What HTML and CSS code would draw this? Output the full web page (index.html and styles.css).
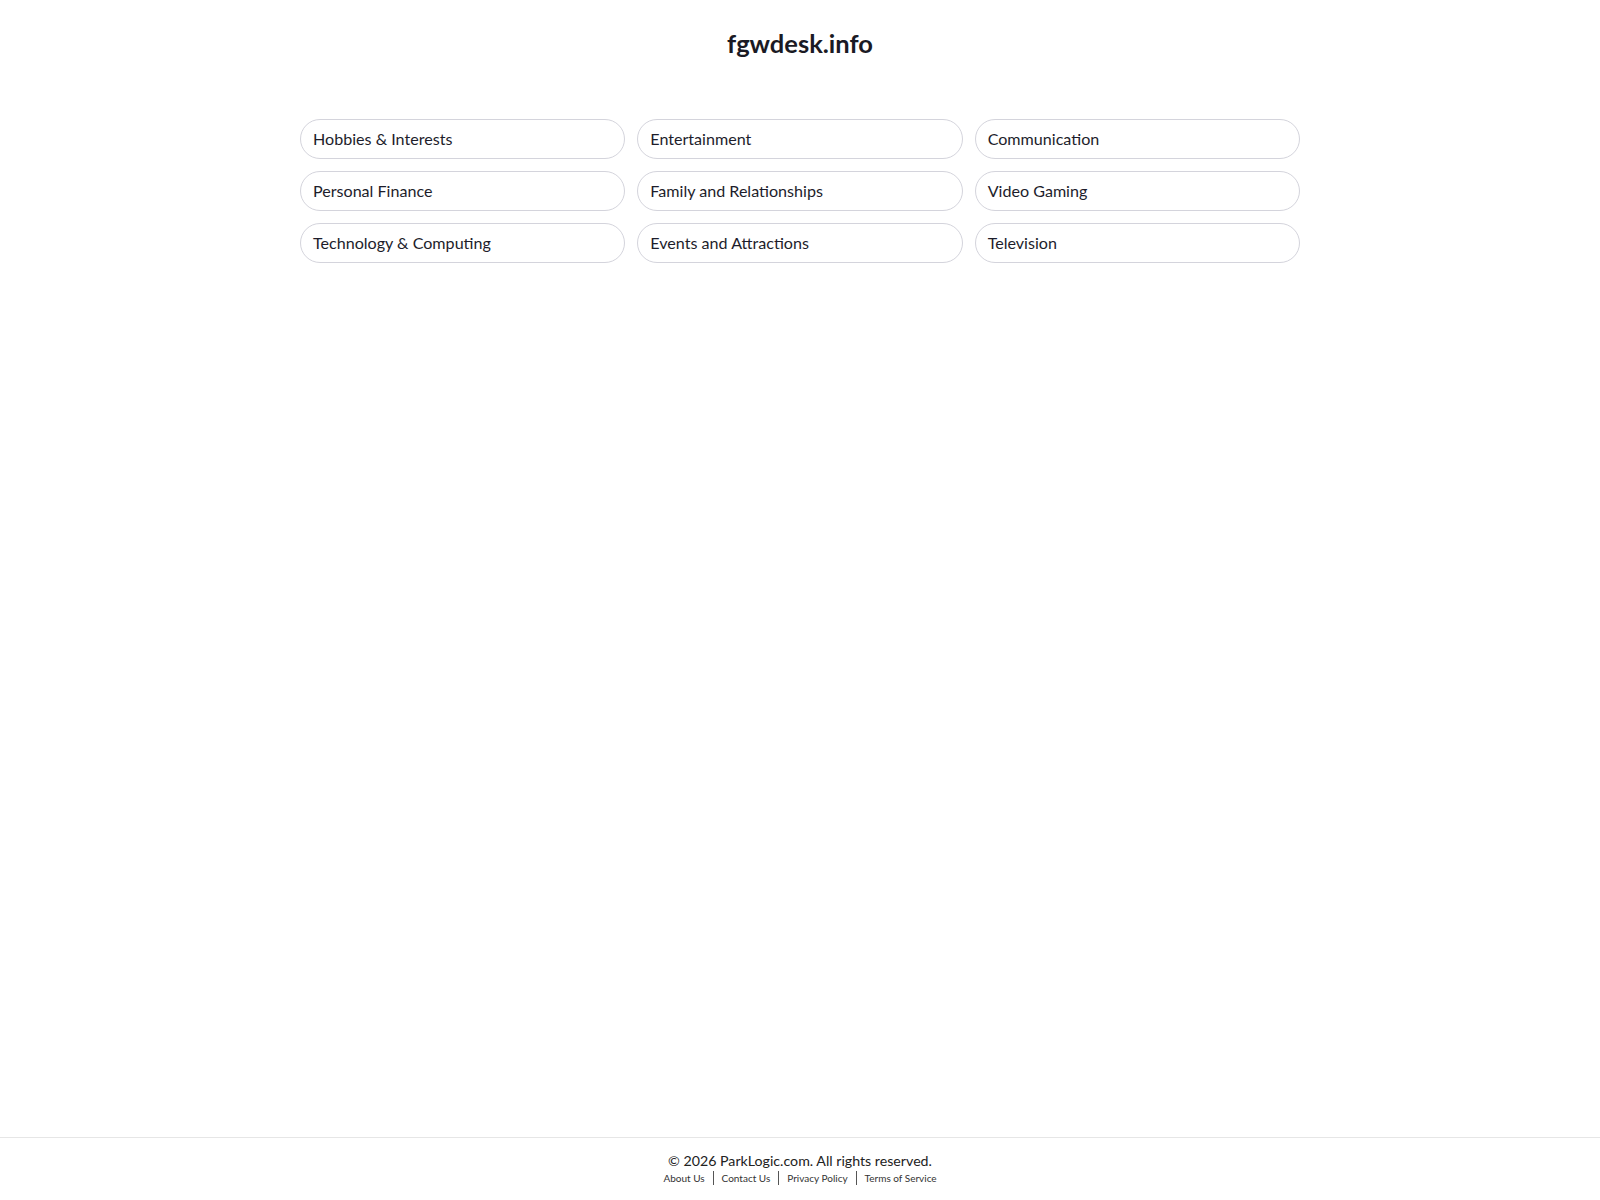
FILE: index.html
```html
<!DOCTYPE html>
<html lang="en">
<head>
<meta charset="utf-8">
<title>fgwdesk.info</title>
<link rel="stylesheet" href="styles.css">
</head>
<body>
<div class="page">
  <header class="header">
    <h1 class="title">fgwdesk.info</h1>
  </header>
  <main class="main">
    <div class="grid">
      <a class="pill" href="#">Hobbies &amp; Interests</a>
      <a class="pill" href="#">Entertainment</a>
      <a class="pill" href="#">Communication</a>
      <a class="pill" href="#">Personal Finance</a>
      <a class="pill" href="#">Family and Relationships</a>
      <a class="pill" href="#">Video Gaming</a>
      <a class="pill" href="#">Technology &amp; Computing</a>
      <a class="pill" href="#">Events and Attractions</a>
      <a class="pill" href="#">Television</a>
    </div>
  </main>
  <footer class="footer">
    <p class="copy">© 2026 ParkLogic.com. All rights reserved.</p>
    <nav class="links">
      <a class="link" href="#">About Us</a>
      <a class="link" href="#">Contact Us</a>
      <a class="link" href="#">Privacy Policy</a>
      <a class="link" href="#">Terms of Service</a>
    </nav>
  </footer>
</div>
</body>
</html>
```

FILE: styles.css
```css
* { box-sizing: border-box; }
html, body { margin: 0; padding: 0; background: #fff; }
body {
  font-family: Lato, "Noto Sans", sans-serif;
  color: #1d1d2b;
}
.page {
  min-height: 100vh;
  display: flex;
  flex-direction: column;
}
.header {
  display: flex;
  justify-content: center;
  padding-top: 27px;
}
.title {
  margin: 0;
  font-size: 25.5px;
  line-height: 32px;
  font-weight: 700;
  color: #1a1a24;
}
.main {
  flex: 1;
  display: flex;
  justify-content: center;
  padding-top: 60px;
}
.grid {
  width: 1000px;
  display: grid;
  grid-template-columns: repeat(3, 1fr);
  gap: 12px 12px;
  align-content: start;
}
.pill {
  display: flex;
  align-items: center;
  height: 40px;
  padding: 0 12px 2px;
  border: 1px solid #d4d4dc;
  border-radius: 20px;
  font-size: 16.1px;
  color: #1d1d2b;
  text-decoration: none;
}
.footer {
  border-top: 1px solid #e6e6e6;
  padding: 14px 0 15px;
  text-align: center;
}
.copy {
  margin: 0;
  font-size: 14.2px;
  line-height: 18px;
  color: #222;
}
.links {
  display: flex;
  justify-content: center;
  margin-top: 1px;
}
.link {
  font-size: 10px;
  line-height: 14px;
  color: #333;
  text-decoration: none;
  padding: 0 8px;
}
.link + .link {
  border-left: 1.5px solid #555;
}
```
